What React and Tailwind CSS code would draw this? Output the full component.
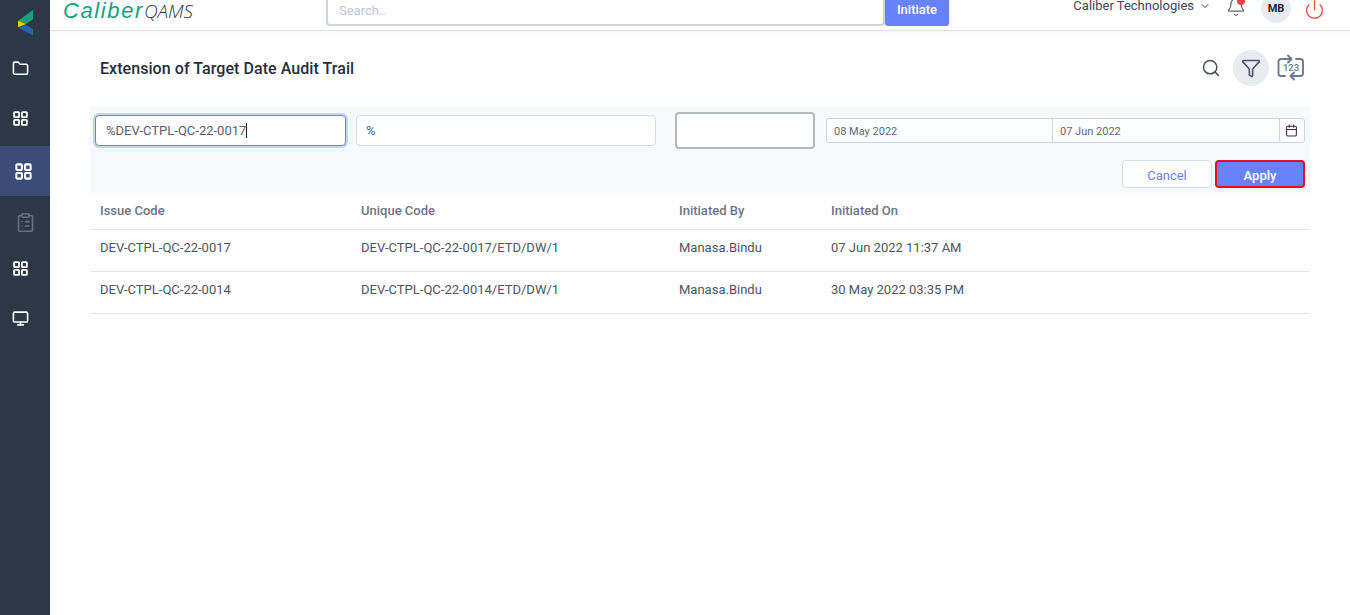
// App.jsx
import React from "react";
import {
  Bell,
  Calendar,
  ChevronDown,
  ClipboardList,
  Folder,
  LayoutGrid,
  Monitor,
  Power,
  Search,
  Funnel,
} from "lucide-react";

const rows = [
  {
    issue: "DEV-CTPL-QC-22-0017",
    unique: "DEV-CTPL-QC-22-0017/ETD/DW/1",
    by: "Manasa.Bindu",
    on: "07 Jun 2022 11:37 AM",
  },
  {
    issue: "DEV-CTPL-QC-22-0014",
    unique: "DEV-CTPL-QC-22-0014/ETD/DW/1",
    by: "Manasa.Bindu",
    on: "30 May 2022 03:35 PM",
  },
];

const Logo = () => (
  <svg width="15" height="26" viewBox="0 0 15 26" className="block">
    <polygon points="0,10.7 15,0 15,9.3 8,14" fill="#1f9d7a" />
    <polygon points="0,10.7 8,14 0,17.3" fill="#f2c81e" />
    <polygon points="0,18 8,14.7 15,19.3 15,25.3" fill="#2a62a8" />
  </svg>
);

const Sidebar = () => (
  <aside className="w-[50px] h-[615px] shrink-0 bg-[#2c3846] flex flex-col text-white">
    <div className="h-[43px] flex justify-center pt-[10px] pl-[1px]">
      <Logo />
    </div>
    <div className="h-[50px] flex items-center justify-center pr-[10px]">
      <Folder size={17} strokeWidth={2.2} />
    </div>
    <div className="h-[50px] flex items-center justify-center pr-[10px]">
      <LayoutGrid size={17} strokeWidth={2.6} />
    </div>
    <div className="h-[50px] mt-[3px] bg-[#3c4b78] flex items-center justify-center pr-[3px]">
      <LayoutGrid size={19} strokeWidth={2.6} />
    </div>
    <div className="h-[50px] mt-[1px] flex items-center justify-center text-[#667080]">
      <ClipboardList size={21} strokeWidth={1.9} />
    </div>
    <div className="h-[50px] -mt-[4px] flex items-center justify-center pr-[10px]">
      <LayoutGrid size={17} strokeWidth={2.6} />
    </div>
    <div className="h-[50px] flex items-center justify-center pr-[10px]">
      <Monitor size={17} strokeWidth={2.2} />
    </div>
  </aside>
);

const Header = () => (
  <header className="relative h-[31px] border-b border-[#dfe2e6] shadow-[0_1px_2px_rgba(0,0,0,0.04)] flex items-end overflow-hidden">
    <div className="w-[276px] h-[30px] shrink-0 pl-[13px] flex items-baseline font-['Liberation_Sans',sans-serif]">
      <span className="text-[22px] italic text-[#16a085] leading-none tracking-[1.6px]">Caliber</span>
      <span className="text-[19px] italic font-light text-[#2c3846] leading-none font-['Open_Sans',sans-serif]">QAMS</span>
    </div>
    <div className="h-[31px] pb-[4px] flex shrink-0">
      <div className="w-[559px] h-[40px] -mt-[13px] shrink-0 border-2 border-t-0 border-[#ccd4e0] rounded-[4px] bg-white flex items-end pb-[4px] pl-[11px] text-[13px] text-[#bcc6da]">
        Search..
      </div>
      <div className="w-[64px] h-[40px] -mt-[13px] bg-[#6782fb] rounded-[3px] text-white text-[13px] flex items-end justify-center pb-[7px] font-medium shrink-0">
        Initiate
      </div>
    </div>
    <div className="ml-auto h-[31px] flex items-start pr-[25px]">
      <div className="flex items-center h-[13px] text-[13px] leading-[13px] text-[#3a4656] mr-[15px]">
        Caliber Technologies
        <ChevronDown size={12} className="ml-[5px]" />
      </div>
      <div className="relative -mt-[2px] mr-[15px] text-[#5c6777]">
        <Bell size={20} strokeWidth={1.5} />
        <span className="absolute top-0 right-[1px] w-[8px] h-[8px] rounded-full bg-[#f0433f]"></span>
      </div>
      <div className="w-[30px] h-[30px] -mt-[6px] rounded-full bg-[#e8ebef] flex items-end justify-center pb-[6px] text-[11px] font-bold text-[#1d2530] mr-[13px]">
        MB
      </div>
      <Power size={21} strokeWidth={1.6} className="text-[#ef5350]" />
    </div>
  </header>
);

const RepeatNumbers = () => (
  <div className="relative w-[28px] h-[28px] text-[#6b7a8d]">
    <svg width="28" height="28" viewBox="0 0 28 28" fill="none" stroke="currentColor" strokeWidth="1.9" strokeLinecap="round" strokeLinejoin="round">
      <path d="M14 5H4A2.5 2.5 0 0 0 1.5 7.5V19.5A2.5 2.5 0 0 0 4 22H8" />
      <path d="M11 1.5l3.5 3.5L11 8.5" />
      <path d="M14 22H23.5A2.5 2.5 0 0 0 26 19.5V7.500A2.500 2.500 0 0 0 23.500 5H19" />
      <path d="M17 18.500L13.500 22L17 25.500" />
    </svg>
    <span className="absolute inset-0 flex items-center justify-center text-[9.5px] font-medium">123</span>
  </div>
);

const FilterPanel = () => (
  <div className="mt-[10px] bg-[#f8f9fb] px-[5px] pt-[6px] pb-[5px]">
    <div className="flex items-center">
      <div className="w-[251px] h-[31px] bg-white border border-[#6782fb] rounded-[4px] shadow-[0_0_0_2px_#c5d3fb] flex items-center pl-[10px] text-[13px] text-[#556070]">
        %DEV-CTPL-QC-22-0017
        <span className="w-px h-[15px] bg-[#222]"></span>
      </div>
      <div className="ml-[10px] w-[300px] h-[31px] bg-white border border-[#d5dbe8] rounded-[4px] flex items-center pl-[9px] text-[13px] text-[#556070]">
        %
      </div>
      <div className="ml-[19px] w-[140px] h-[37px] bg-white border-2 border-[#b4b9c0] rounded-[4px]"></div>
      <div className="ml-[11px] w-[479px] h-[25px] bg-white border border-[#cdd5e4] rounded-[3px] flex text-[11px] text-[#5d6878]">
        <div className="w-[226px] border-r border-[#cdd5e4] flex items-center pl-[7px] pt-[3px]">08 May 2022</div>
        <div className="w-[226px] flex items-center pl-[7px] pt-[3px]">07 Jun 2022</div>
        <div className="flex-1 border-l border-[#cdd5e4] flex items-center justify-center text-[#4a1f4a] pr-[1px]">
          <Calendar size={13} />
        </div>
      </div>
    </div>
    <div className="mt-[11px] flex justify-end gap-[3px]">
      <button className="w-[90px] h-[28px] bg-white border border-[#d5dbe8] rounded-[4px] text-[13px] text-[#6782fb] pt-[3px]">
        Cancel
      </button>
      <button className="w-[90px] h-[28px] bg-[#6782fb] border-2 border-[#ee0a1e] rounded-[4px] text-[13px] font-medium text-white pt-[4px]">
        Apply
      </button>
    </div>
  </div>
);

const AuditTable = () => (
  <table className="w-full table-fixed border-collapse text-[13px]">
    <thead>
      <tr className="h-[36px] border-b border-[#e3e6ea] text-left text-[#6a7688]">
        <th className="w-[271px] pl-[10px] font-medium">Issue Code</th>
        <th className="w-[318px] font-medium">Unique Code</th>
        <th className="w-[152px] font-medium">Initiated By</th>
        <th className="font-medium">Initiated On</th>
      </tr>
    </thead>
    <tbody className="text-[#4a5565]">
      {rows.map((row) => (
        <tr key={row.issue} className="h-[42px] border-b border-[#e3e6ea]">
          <td className="pl-[10px] pb-[4px]">{row.issue}</td>
          <td className="pb-[4px]">{row.unique}</td>
          <td className="pb-[4px]">{row.by}</td>
          <td className="pb-[4px]">{row.on}</td>
        </tr>
      ))}
    </tbody>
  </table>
);

export default function App() {
  return (
    <div className="w-[1350px] h-[615px] overflow-hidden flex bg-white font-['Roboto',sans-serif]">
      <Sidebar />
      <div className="flex-1 min-w-0">
        <Header />
        <main className="px-[40px]">
          <div className="h-[55px] mt-[10px] flex items-center pl-[10px]">
            <h1 className="text-[16px] font-medium tracking-[0.06px] text-[#262e3a]">Extension of Target Date Audit Trail</h1>
            <div className="ml-auto flex items-center pr-[5px] -mt-[1px]">
              <Search size={20} strokeWidth={1.8} className="text-[#3f5060]" />
              <div className="ml-[12px] w-[36px] h-[36px] rounded-full bg-[#e8ebef] flex items-center justify-center text-[#485668]">
                <Funnel size={20} strokeWidth={1.9} />
              </div>
              <div className="ml-[8px]">
                <RepeatNumbers />
              </div>
            </div>
          </div>
          <FilterPanel />
          <AuditTable />
        </main>
      </div>
    </div>
  );
}
